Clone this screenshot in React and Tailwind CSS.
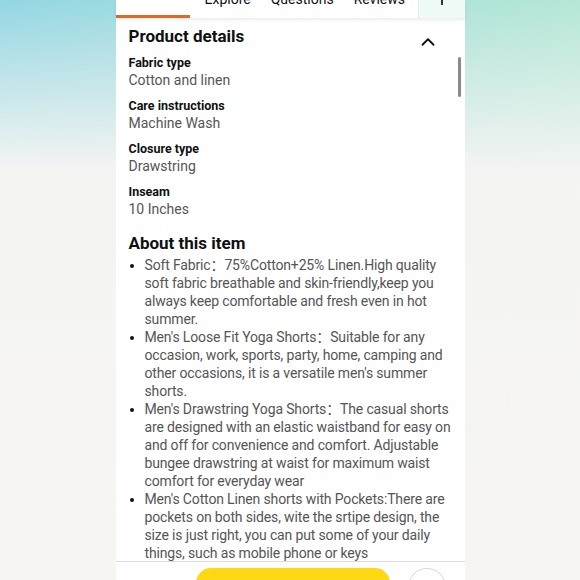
import { ChevronUp } from 'lucide-react'

const details = [
  ['Fabric type', 'Cotton and linen'],
  ['Care instructions', 'Machine Wash'],
  ['Closure type', 'Drawstring'],
  ['Inseam', '10 Inches'],
]

const bullets = [
  'Soft Fabric：75%Cotton+25% Linen.High quality soft fabric breathable and skin-friendly,keep you always keep comfortable and fresh even in hot summer.',
  "Men's Loose Fit Yoga Shorts：Suitable for any occasion, work, sports, party, home, camping and other occasions, it is a versatile men's summer shorts.",
  "Men's Drawstring Yoga Shorts：The casual shorts are designed with an elastic waistband for easy on and off for convenience and comfort. Adjustable bungee drawstring at waist for maximum waist comfort for everyday wear",
  "Men's Cotton Linen shorts with Pockets:There are pockets on both sides, wite the srtipe design, the size is just right, you can put some of your daily things, such as mobile phone or keys",
]

export default function App() {
  return (
    <div
      className="w-[580px] h-[580px] overflow-hidden flex justify-center bg-[linear-gradient(180deg,rgba(245,245,243,0)_0px,#f4f4f3_170px,#f6f5f2_580px),linear-gradient(90deg,#94d6e3,#b4e7d6)]"
      style={{ fontFamily: 'Roboto, "Noto Sans CJK SC", sans-serif' }}
    >
      <div className="relative w-[349px] h-full bg-white flex flex-col">
        {/* tabs */}
        <div className="relative h-[18px] shrink-0 flex overflow-hidden shadow-[0_2px_3px_rgba(0,0,0,0.08)] z-10">
          <div className="w-[74px] h-full relative">
            <div className="absolute left-0 right-0 bottom-0 h-[3px] bg-[#dd6a26]" />
          </div>
          <div className="flex-1 flex gap-[15px] pl-[15px] -mt-[9px] text-[14px] leading-[16px] text-[#0f1111]">
            <span>Explore</span>
            <span className="pl-[5px]">Questions</span>
            <span className="pl-[5px]">Reviews</span>
          </div>
          <div className="w-[47px] h-full bg-[#eefbf6] border-l border-[#e6eeea] flex justify-center">
            <div className="w-[2px] h-[5px] bg-[#333]" />
          </div>
        </div>

        <div className="flex-1 overflow-hidden px-[13px]">
          <div className="h-[24px] mt-[6px] flex items-start justify-between">
            <h2 className="text-[17px] leading-[24px] font-bold text-[#0f1111]">Product details</h2>
            <ChevronUp className="mt-[7px] mr-[13px] text-[#111]" size={22} strokeWidth={2} />
          </div>
          <div className="flex flex-col gap-[9px] mt-[7px]">
            {details.map(([k, v]) => (
              <div key={k}>
                <div className="text-[12.5px] leading-[16px] font-bold text-[#0f1111]">{k}</div>
                <div className="text-[14px] leading-[18px] text-[#555]">{v}</div>
              </div>
            ))}
          </div>

          <h2 className="mt-[13px] text-[17px] leading-[24px] font-bold text-[#0f1111]">About this item</h2>
          <ul className="mt-[1px] pl-[16px] list-disc marker:text-[#111] text-[14px] leading-[18px] tracking-[-0.15px] text-[#555]">
            {bullets.map((b) => (
              <li key={b}>{b}</li>
            ))}
          </ul>
        </div>

        {/* bottom bar */}
        <div className="h-[19px] shrink-0 border-t border-[#dcdcdc] flex items-start pt-[6px]">
          <div className="ml-[80px] w-[194px] h-[30px] rounded-full bg-[#ffd814]" />
          <div className="ml-[18px] w-[38px] h-[38px] rounded-full border border-[#d5d9d9] bg-white" />
        </div>

        <div className="absolute right-[4px] top-[57px] w-[3px] h-[40px] rounded-full bg-[#8a8a8a]" />
      </div>
    </div>
  )
}
